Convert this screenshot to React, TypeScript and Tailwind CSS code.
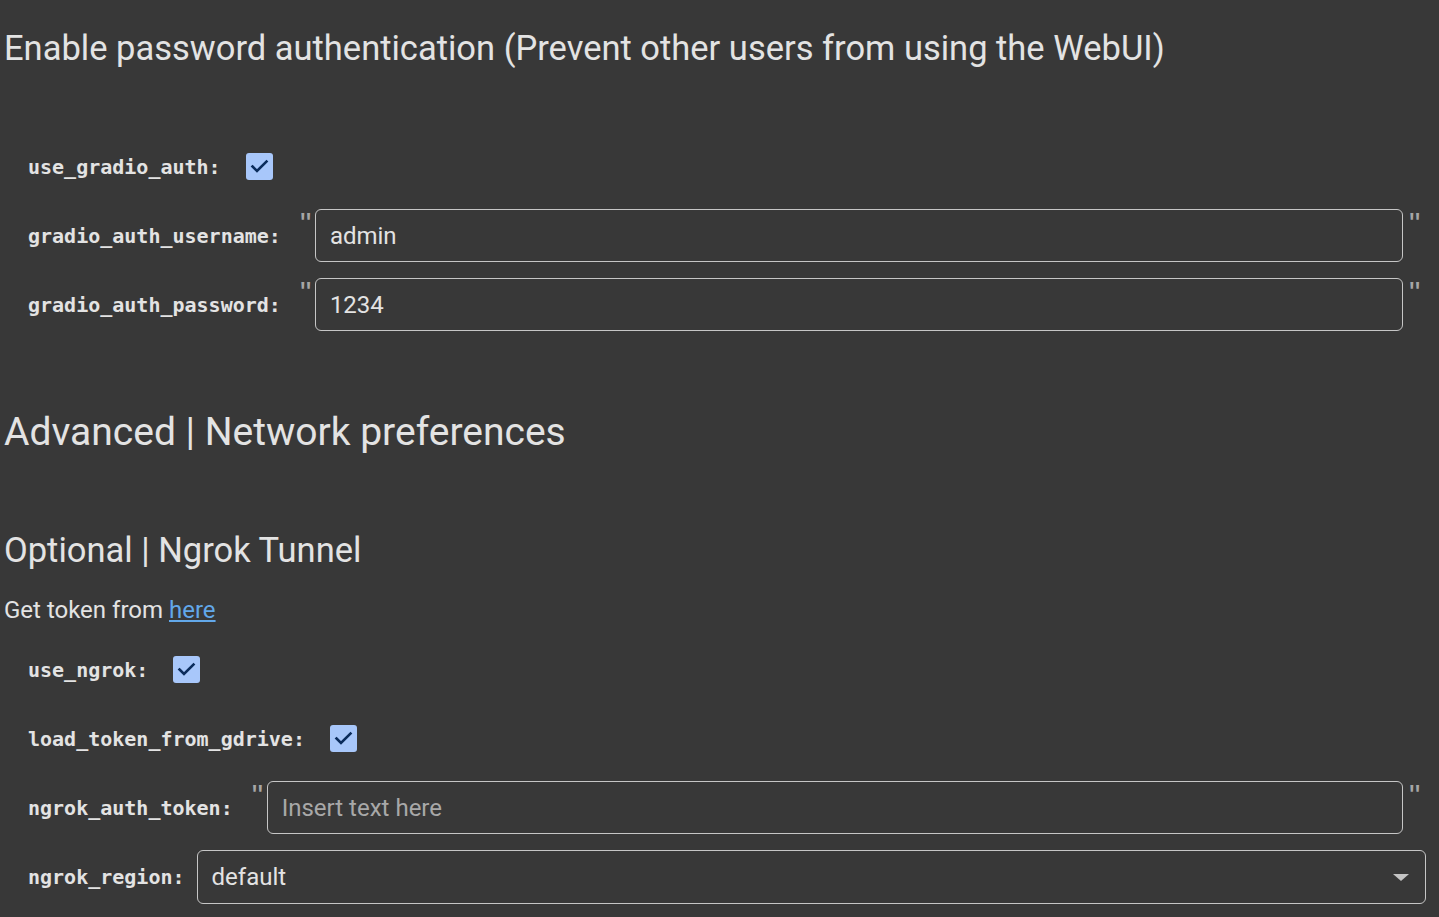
import React from "react";

const mono = { fontFamily: '"DejaVu Sans Mono", "Liberation Mono", monospace' };

function Check() {
  return (
    <div className="w-[27px] h-[27px] rounded-[3px] bg-[#a8c7fa] flex items-center justify-center">
      <svg width="27" height="27" viewBox="0 0 27 27">
        <path d="M6.5 13.5 L11 18 L20.5 8.5" fill="none" stroke="#0b2c5c" strokeWidth="2.6" strokeLinecap="square" />
      </svg>
    </div>
  );
}

function Label({ children }: { children: React.ReactNode }) {
  return (
    <span className="text-[20px] font-bold text-[#e3e3e3] leading-none whitespace-nowrap" style={mono}>
      {children}
    </span>
  );
}

function Quote() {
  return (
    <span className="self-start -mt-[1px] text-[32px] leading-none text-[#a6a6a6] font-['Liberation_Sans',sans-serif] w-[8px] overflow-visible">
      "
    </span>
  );
}

function CheckRow({ label, gap }: { label: string; gap: string }) {
  return (
    <div className="flex items-center h-[53px] pl-[28px]">
      <Label>{label}</Label>
      <div className={gap}>
        <Check />
      </div>
    </div>
  );
}

function TextRow({ label, value, placeholder, gap }: { label: string; value?: string; placeholder?: string; gap: string }) {
  return (
    <div className="flex items-center h-[53px] pl-[28px] pr-[13px]">
      <Label>{label}</Label>
      <div className={`${gap} flex h-full`}>
        <Quote />
      </div>
      <div className="ml-[7px] flex-1 h-full rounded-[6px] border border-[#c6c6c6] flex items-center px-[14px]">
        <span className={`text-[24px] font-['Roboto',sans-serif] ${value ? "text-[#e3e3e3]" : "text-[#a8a8a8]"}`}>
          {value ?? placeholder}
        </span>
      </div>
      <div className="w-[23px] pl-[6px] flex h-full">
        <Quote />
      </div>
    </div>
  );
}

export default function App() {
  return (
    <div className="w-[1439px] h-[917px] bg-[#383838] overflow-hidden font-['Roboto',sans-serif] text-[#e3e3e3]">
      <h1 className="pt-[24px] pl-[4px] text-[34.5px] leading-[48px] text-[#e3e3e3]">
        Enable password authentication (Prevent other users from using the WebUI)
      </h1>
      <div className="mt-[68px] flex flex-col gap-[16px]">
        <CheckRow label="use_gradio_auth:" gap="ml-[25px]" />
        <TextRow label="gradio_auth_username:" value="admin" gap="ml-[19px]" />
        <TextRow label="gradio_auth_password:" value="1234" gap="ml-[19px]" />
      </div>
      <h2 className="mt-[77px] pl-[4px] text-[39px] leading-[48px] text-[#e3e3e3]">Advanced | Network preferences</h2>
      <h2 className="mt-[70px] pl-[4px] text-[34.5px] leading-[48px] text-[#e3e3e3]">Optional | Ngrok Tunnel</h2>
      <p className="mt-[20px] pl-[4px] text-[24px] leading-[32px] text-[#e3e3e3]">
        Get token from <a className="text-[#62a8ea] underline">here</a>
      </p>
      <div className="mt-[17px] flex flex-col gap-[16px]">
        <CheckRow label="use_ngrok:" gap="ml-[25px]" />
        <CheckRow label="load_token_from_gdrive:" gap="ml-[25px]" />
        <TextRow label="ngrok_auth_token:" placeholder="Insert text here" gap="ml-[19px]" />
        <div className="flex items-center h-[54px] pl-[28px] pr-[13px]">
          <Label>ngrok_region:</Label>
          <div className="ml-[12px] flex-1 h-full rounded-[6px] border border-[#c6c6c6] flex items-center justify-between pl-[14px] pr-[16px]">
            <span className="text-[24px] text-[#e3e3e3]">default</span>
            <svg width="16" height="7" viewBox="0 0 16 7">
              <path d="M0 0 L16 0 L8 7 Z" fill="#c4c4c4" />
            </svg>
          </div>
        </div>
      </div>
    </div>
  );
}
